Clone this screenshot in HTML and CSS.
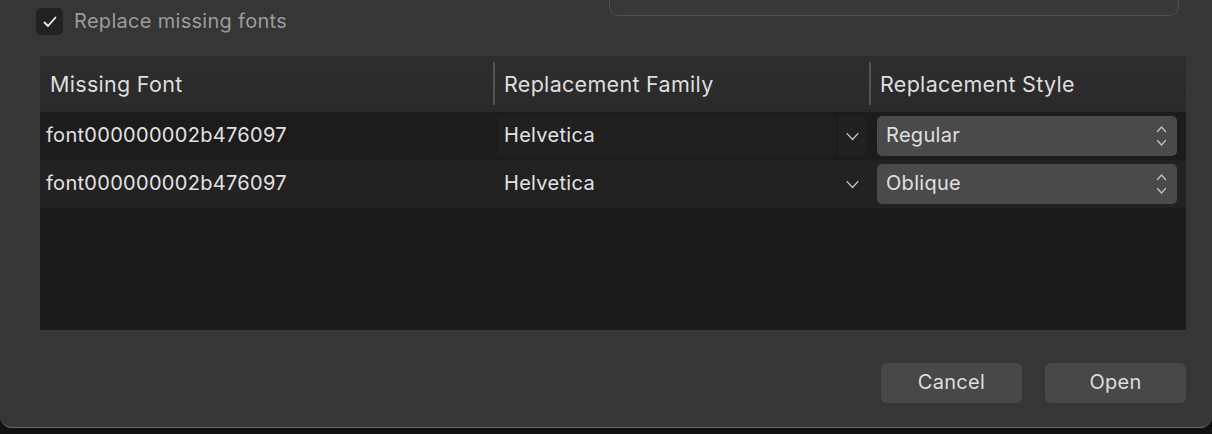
FILE: index.html
```html
<!DOCTYPE html>
<html>
<head>
<meta charset="utf-8">
<link rel="stylesheet" href="styles.css">
</head>
<body>
<div class="window">
  <div class="top-row">
    <label class="check">
      <span class="box"><svg width="16" height="14" viewBox="0 0 16 14"><path d="M2.5 7.5 L6 11 L13.5 2.5" fill="none" stroke="#f2f2f2" stroke-width="1.8" stroke-linecap="round" stroke-linejoin="round"/></svg></span>
      <span class="check-label">Replace missing fonts</span>
    </label>
    <div class="prev-box"></div>
  </div>

  <div class="table">
    <div class="thead">
      <div class="th c1">Missing Font</div>
      <div class="th c2"><span class="sep"></span>Replacement Family</div>
      <div class="th c3"><span class="sep"></span>Replacement Style</div>
    </div>
    <div class="tr odd">
      <div class="td c1">font000000002b476097</div>
      <div class="td c2">
        <div class="combo active">
          <span class="combo-field">Helvetica</span>
          <span class="combo-btn"><svg width="13" height="9" viewBox="0 0 13 9"><path d="M1 1.5 L6.5 7.5 L12 1.5" fill="none" stroke="#c4c4c4" stroke-width="1.2" stroke-linecap="round" stroke-linejoin="round"/></svg></span>
        </div>
      </div>
      <div class="td c3">
        <div class="popup"><span>Regular</span>
          <svg class="updown" width="11" height="22" viewBox="0 0 11 22"><path d="M1.5 6.5 L5.5 2 L9.5 6.5 M1.5 15.5 L5.5 20 L9.5 15.5" fill="none" stroke="#c4c4c4" stroke-width="1.2" stroke-linecap="round" stroke-linejoin="round"/></svg>
        </div>
      </div>
    </div>
    <div class="tr even">
      <div class="td c1">font000000002b476097</div>
      <div class="td c2">
        <div class="combo">
          <span class="combo-field">Helvetica</span>
          <span class="combo-btn"><svg width="13" height="9" viewBox="0 0 13 9"><path d="M1 1.5 L6.5 7.5 L12 1.5" fill="none" stroke="#c4c4c4" stroke-width="1.2" stroke-linecap="round" stroke-linejoin="round"/></svg></span>
        </div>
      </div>
      <div class="td c3">
        <div class="popup"><span>Oblique</span>
          <svg class="updown" width="11" height="22" viewBox="0 0 11 22"><path d="M1.5 6.5 L5.5 2 L9.5 6.5 M1.5 15.5 L5.5 20 L9.5 15.5" fill="none" stroke="#c4c4c4" stroke-width="1.2" stroke-linecap="round" stroke-linejoin="round"/></svg>
        </div>
      </div>
    </div>
    <div class="tfill"></div>
  </div>

  <div class="actions">
    <button class="btn">Cancel</button>
    <button class="btn">Open</button>
  </div>
</div>
</body>
</html>
```

FILE: styles.css
```css
* { box-sizing: border-box; }
html, body {
  margin: 0;
  padding: 0;
  background: #111111;
  width: 1212px;
  height: 434px;
  overflow: hidden;
  font-family: Inter, "Noto Sans", sans-serif;
  font-size: 20px;
  letter-spacing: 0.3px;
}
.window {
  width: 1212px;
  height: 428px;
  background: #363636;
  border-bottom: 1.5px solid #6a6a6a;
  border-radius: 0 0 12px 12px;
  padding: 0 26px 0 40px;
  display: flex;
  flex-direction: column;
}
.top-row {
  height: 56px;
  display: flex;
  align-items: flex-start;
}
.check {
  display: flex;
  align-items: center;
  margin-left: -4px;
  margin-top: 8px;
  gap: 11px;
}
.box {
  width: 27px;
  height: 27px;
  border-radius: 5px;
  background: #222222;
  display: flex;
  align-items: center;
  justify-content: center;
}
.check-label {
  color: #9c9c9c;
  padding-bottom: 1px;
}
.prev-box {
  margin-left: auto;
  margin-right: 7px;
  width: 570px;
  height: 16px;
  border: 1.5px solid #4e4e4e;
  border-top: none;
  border-radius: 0 0 9px 9px;
  background: #393939;
}
.table {
  height: 274px;
  background: #1b1b1b;
  display: flex;
  flex-direction: column;
}
.thead {
  height: 56px;
  display: flex;
  background: linear-gradient(#2e2e2e, #2a2a2a);
  color: #dedede;
  font-size: 21.5px;
  letter-spacing: 0.3px;
}
.th {
  position: relative;
  display: flex;
  align-items: center;
  padding-bottom: 1px;
}
.th.c1 { padding-left: 10px; }
.th.c2, .th.c3 { padding-left: 11px; }
.sep {
  position: absolute;
  left: 0;
  top: 6px;
  bottom: 7px;
  width: 1.5px;
  background: #545454;
}
.c1 { width: 453px; }
.c2 { width: 376px; }
.c3 { width: 317px; }
.tr {
  height: 48px;
  display: flex;
  color: #e2e2e2;
}
.tr.odd { background: #1c1c1c; }
.tr.even { background: #222222; }
.td {
  display: flex;
  align-items: center;
}
.td.c1 { padding-left: 6px; padding-bottom: 3px; }
.td.c2 { padding-left: 5px; padding-right: 3px; }
.td.c3 { padding-left: 8px; padding-right: 9px; }
.combo {
  flex: 1;
  height: 40px;
  display: flex;
  gap: 2px;
}
.combo-field {
  flex: 1;
  display: flex;
  align-items: center;
  padding-left: 6px;
  padding-bottom: 2px;
  border-radius: 3px;
}
.combo-btn {
  width: 28px;
  display: flex;
  align-items: center;
  justify-content: center;
  border-radius: 3px;
}
.combo.active .combo-field { background: #202020; }
.combo.active .combo-btn { background: #212121; }
.popup {
  flex: 1;
  height: 40px;
  border-radius: 5px;
  background: #4a4a4a;
  display: flex;
  align-items: center;
  justify-content: space-between;
  padding: 0 10px 0 9px;
  color: #e0e0e0;
}
.popup span { padding-bottom: 2px; }
.tfill { flex: 1; }
.actions {
  display: flex;
  justify-content: flex-end;
  gap: 23px;
  margin-top: 33px;
}
.btn {
  width: 141px;
  height: 40px;
  border: none;
  border-radius: 6px;
  background: #484848;
  color: #dedede;
  font-family: Inter, "Noto Sans", sans-serif;
  font-size: 20px;
  letter-spacing: 0.3px;
  padding: 0 0 2px;
}
```
